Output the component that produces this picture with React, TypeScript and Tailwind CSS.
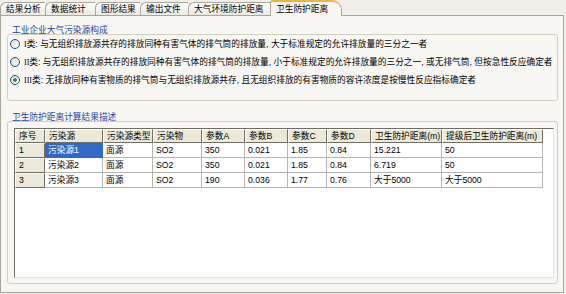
import React from "react";

const tabs = ["结果分析", "数据统计", "图形结果", "输出文件", "大气环境防护距离"];
const tabWidths = ["w-[45px]", "w-[50px]", "w-[45px]", "w-[48px]", "w-[82px]"];

const options = [
  { num: "I", text: "类: 与无组织排放源共存的排放同种有害气体的排气筒的排放量, 大于标准规定的允许排放量的三分之一者", checked: false },
  { num: "II", text: "类: 与无组织排放源共存的排放同种有害气体的排气筒的排放量, 小于标准规定的允许排放量的三分之一, 或无排气筒, 但按急性反应确定者", checked: false },
  { num: "III", text: "类: 无排放同种有害物质的排气筒与无组织排放源共存, 且无组织排放的有害物质的容许浓度是按慢性反应指标确定者", checked: true },
];

const headers = ["序号", "污染源", "污染源类型", "污染物", "参数A", "参数B", "参数C", "参数D", "卫生防护距离(m)", "提级后卫生防护距离(m)"];

const rows = [
  ["1", "污染源1", "面源", "SO2", "350", "0.021", "1.85", "0.84", "15.221", "50"],
  ["2", "污染源2", "面源", "SO2", "350", "0.021", "1.85", "0.84", "6.719", "50"],
  ["3", "污染源3", "面源", "SO2", "190", "0.036", "1.77", "0.76", "大于5000", "大于5000"],
];

function Radio({ checked }: { checked: boolean }) {
  return (
    <span className="flex h-[10px] w-[10px] shrink-0 items-center justify-center rounded-full border border-[#1c5180] bg-gradient-to-br from-[#dcdcd6] to-white">
      {checked && <span className="h-[4px] w-[4px] rounded-full bg-[#3d8a3a]" />}
    </span>
  );
}

export default function App() {
  return (
    <div className="h-[294px] w-[566px] overflow-hidden bg-[#f1efe8] text-[8.7px] text-black font-['Liberation_Sans','Noto_Sans_CJK_SC',sans-serif]">
      {/* tab strip */}
      <div className="flex h-[15px] items-end">
        {tabs.map((t, i) => (
          <div
            key={t}
            className={`flex h-[13px] items-center rounded-tl-[6px] border-l border-t border-[#a7a69b] bg-gradient-to-b from-white to-[#e9e8e0] pl-[5px] leading-[9px] ${tabWidths[i]} ${i === 0 ? "pl-[4px]" : ""}`}
          >
            {t}
          </div>
        ))}
        <div className="relative z-10 -mb-px flex h-[16px] w-[72px] items-center rounded-t-[3px] rounded-tr-[10px] border-x border-t-2 border-[#a7a69b] border-t-[#f0b43e] bg-[#f8f7f3] pl-[5px] leading-[9px]">
          卫生防护距离
        </div>
      </div>

      {/* page */}
      <div className="h-[278px] w-[564px] border border-[#a7a69b] bg-[#f8f7f3] pl-[6px] pr-[5px] pt-[10px]">
        {/* group 1 */}
        <div className="h-[8px] pl-[5px] leading-[8px] text-[#2443a6]">工业企业大气污染源构成</div>
        <div className="h-[67px] rounded-[3px] border border-[#d0d0bf] pl-[2px]">
          {options.map((o) => (
            <div key={o.num} className="flex h-[18px] items-center gap-[4px] first:mt-0">
              <Radio checked={o.checked} />
              <span className="whitespace-nowrap leading-[9px]">
                <span className="font-['Liberation_Serif',serif] text-[8px]">{o.num}</span>
                {o.text}
              </span>
            </div>
          ))}
        </div>

        {/* group 2 */}
        <div className="mt-[12px] h-[8px] pl-[5px] leading-[8px] text-[#2443a6]">卫生防护距离计算结果描述</div>
        <div className="h-[163px] rounded-[3px] border border-[#d0d0bf] pb-[5px] pl-[6px] pr-[3px] pt-[6px]">
          <div className="h-full border-l border-t border-b border-r border-l-[#6d6c66] border-t-[#6d6c66] border-b-[#e6e5e0] border-r-[#e6e5e0] bg-white">
            <div className="grid grid-cols-[30px_58px_50px_49px_43px_43px_39px_44px_71px_101px]">
              {headers.map((h) => (
                <div
                  key={h}
                  className="flex h-[14px] items-center whitespace-nowrap border-b border-l border-r border-t border-b-[#716f64] border-l-white border-r-[#716f64] border-t-white bg-[#ece9d8] pl-[3px] leading-[9px]"
                >
                  {h}
                </div>
              ))}
              {rows.map((r, ri) =>
                r.map((c, ci) =>
                  ci === 0 ? (
                    <div
                      key={`${ri}-${ci}`}
                      className="flex h-[15px] items-center border-b border-l border-r border-t border-b-[#716f64] border-l-white border-r-[#716f64] border-t-white bg-[#ece9d8] pl-[3px] leading-[9px]"
                    >
                      {c}
                    </div>
                  ) : ri === 0 && ci === 1 ? (
                    <div key={`${ri}-${ci}`} className="flex h-[15px] items-center bg-[#316ac5] pl-[3px] leading-[9px] text-white">
                      {c}
                    </div>
                  ) : (
                    <div
                      key={`${ri}-${ci}`}
                      className="flex h-[15px] items-center whitespace-nowrap border-b border-r border-[#b5b5b5] pl-[3px] leading-[9px]"
                    >
                      {c}
                    </div>
                  )
                )
              )}
            </div>
          </div>
        </div>
      </div>
    </div>
  );
}
